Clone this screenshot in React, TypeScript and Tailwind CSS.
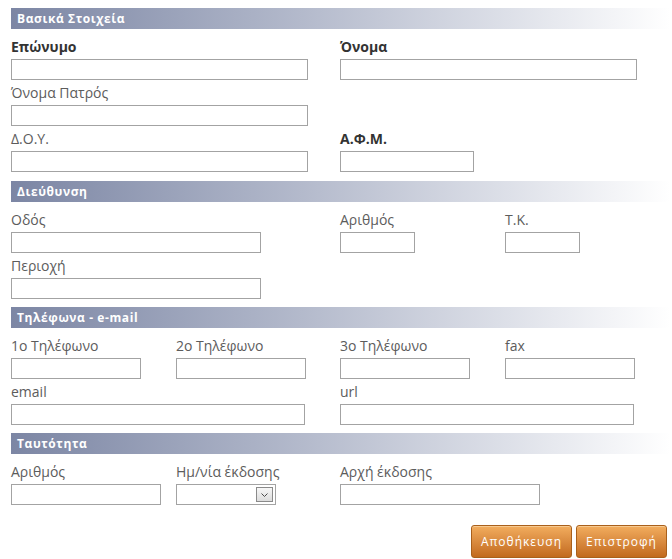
import { ReactNode } from "react";

const font = { fontFamily: '"Open Sans", "Noto Sans", sans-serif' };

function SectionBar({ title }: { title: string }) {
  return (
    <div className="flex items-center h-[21px] pl-[6px] bg-gradient-to-r from-[#7c86a4] to-white">
      <span className="font-bold text-[12px] text-white tracking-[0.6px] leading-none">
        {title}
      </span>
    </div>
  );
}

function Field({
  label,
  bold,
  width,
  children,
}: {
  label: string;
  bold?: boolean;
  width: string;
  children?: ReactNode;
}) {
  return (
    <div className="flex flex-col">
      <label
        className={`flex items-end h-[25px] pb-[3px] text-[14px] leading-[18px] ${
          bold ? "font-bold text-[#333333]" : "text-[#5c5c5c]"
        }`}
      >
        {label}
      </label>
      {children ?? (
        <input
          type="text"
          className={`${width} h-[21px] border border-[#a3a3a3] bg-white outline-none`}
        />
      )}
    </div>
  );
}

function DateSelect() {
  return (
    <div className="relative flex items-center w-[100px] h-[21px] border border-[#a3a3a3] bg-white">
      <div className="absolute right-[2px] top-[2px] flex justify-center items-center w-[17px] h-[15px] border border-[#8a8a8a] bg-gradient-to-b from-[#f7f7f7] to-[#dcdcdc]">
        <svg width="7" height="4" viewBox="0 0 7 4">
          <path d="M0.5 0.5 L3.5 3.5 L6.5 0.5" stroke="#4a4a4a" fill="none" />
        </svg>
      </div>
    </div>
  );
}

function Section({
  title,
  first,
  children,
}: {
  title: string;
  first?: boolean;
  children: ReactNode;
}) {
  return (
    <section className={first ? "mb-[9px]" : "mb-[8px]"}>
      <SectionBar title={title} />
      <div className="grid grid-cols-[165px_164px_165px_1fr] pt-[5px]">{children}</div>
    </section>
  );
}

export default function App() {
  return (
    <div className="w-[672px] h-[559px] bg-white pl-[11px] pr-[2px] pt-[8px]" style={font}>
      <Section title="Βασικά Στοιχεία" first>
        <div className="col-span-2">
          <Field label="Επώνυμο" bold width="w-[297px]" />
        </div>
        <div className="col-span-2">
          <Field label="Όνομα" bold width="w-[297px]" />
        </div>
        <div className="col-span-4">
          <Field label="Όνομα Πατρός" width="w-[297px]" />
        </div>
        <div className="col-span-2">
          <Field label="Δ.Ο.Υ." width="w-[297px]" />
        </div>
        <div className="col-span-2">
          <Field label="Α.Φ.Μ." bold width="w-[134px]" />
        </div>
      </Section>

      <Section title="Διεύθυνση">
        <div className="col-span-2">
          <Field label="Οδός" width="w-[250px]" />
        </div>
        <Field label="Αριθμός" width="w-[75px]" />
        <Field label="Τ.Κ." width="w-[75px]" />
        <div className="col-span-4">
          <Field label="Περιοχή" width="w-[250px]" />
        </div>
      </Section>

      <Section title="Τηλέφωνα - e-mail">
        <Field label="1ο Τηλέφωνο" width="w-[130px]" />
        <Field label="2ο Τηλέφωνο" width="w-[130px]" />
        <Field label="3ο Τηλέφωνο" width="w-[130px]" />
        <Field label="fax" width="w-[130px]" />
        <div className="col-span-2">
          <Field label="email" width="w-[294px]" />
        </div>
        <div className="col-span-2">
          <Field label="url" width="w-[294px]" />
        </div>
      </Section>

      <Section title="Ταυτότητα">
        <Field label="Αριθμός" width="w-[150px]" />
        <Field label="Ημ/νία έκδοσης" width="w-[100px]">
          <DateSelect />
        </Field>
        <div className="col-span-2">
          <Field label="Αρχή έκδοσης" width="w-[200px]" />
        </div>
      </Section>

      <div className="flex justify-end gap-[4px] pt-[12px] pr-[3px]">
        <button className="w-[101px] h-[33px] rounded-[3px] border border-[#a9601c] bg-gradient-to-b from-[#f2ad5e] to-[#c26a1d] text-white text-[12px] tracking-[1px] shadow-[inset_0_1px_0_#f7c98f]">
          Αποθήκευση
        </button>
        <button className="w-[91px] h-[33px] rounded-[3px] border border-[#a9601c] bg-gradient-to-b from-[#f2ad5e] to-[#c26a1d] text-white text-[12px] tracking-[1px] shadow-[inset_0_1px_0_#f7c98f]">
          Επιστροφή
        </button>
      </div>
    </div>
  );
}
